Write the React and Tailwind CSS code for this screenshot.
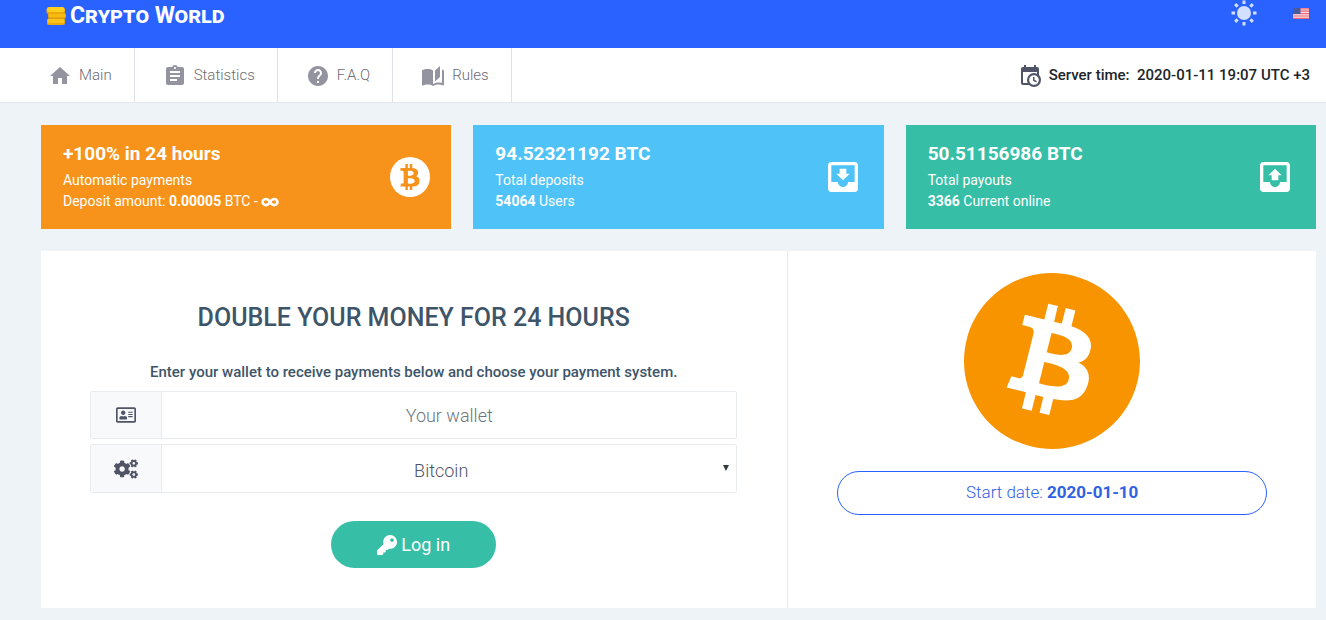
import { FaBtc, FaCogs, FaInfinity, FaKey, FaRegAddressCard } from "react-icons/fa";
import { MdAssignment, MdHelp, MdHome, MdMoveToInbox } from "react-icons/md";
import { SiBitcoin } from "react-icons/si";

function BookIcon({ className }) {
    return (
        <svg viewBox="0 0 24 24" fill="currentColor" className={className} aria-hidden="true">
            <path d="M19,2L14,6.5V17.5L19,13V2M6.5,5C4.55,5 2.45,5.4 1,6.5V21.16C1,21.41 1.25,21.66 1.5,21.66C1.6,21.66 1.65,21.59 1.75,21.59C3.1,20.94 5.05,20.5 6.5,20.5C8.45,20.5 10.55,20.9 12,22C13.35,21.15 15.8,20.5 17.5,20.5C19.15,20.5 20.85,20.81 22.25,21.56C22.35,21.61 22.4,21.59 22.5,21.59C22.75,21.59 23,21.34 23,21.09V6.5C22.4,6.05 21.75,5.75 21,5.5V19C19.9,18.65 18.7,18.5 17.5,18.5C15.8,18.5 13.35,19.15 12,20V6.5C10.55,5.4 8.45,5 6.5,5Z" />
        </svg>
    );
}

function CalendarClockIcon({ className }) {
    return (
        <svg viewBox="0 0 24 24" fill="currentColor" className={className} aria-hidden="true">
            <path d="M15,13H16.5V15.82L18.94,17.23L18.19,18.53L15,16.69V13M19,8H5V19H9.67C9.24,18.09 9,17.07 9,16A7,7 0 0,1 16,9C17.07,9 18.09,9.24 19,9.67V8M5,21C3.89,21 3,20.1 3,19V5C3,3.89 3.89,3 5,3H6V1H8V3H16V1H18V3H19A2,2 0 0,1 21,5V11.1C22.24,12.36 23,14.09 23,16A7,7 0 0,1 16,23C14.09,23 12.36,22.24 11.1,21H5M16,11.15A4.85,4.85 0 0,0 11.15,16C11.15,18.68 13.32,20.85 16,20.85A4.85,4.85 0 0,0 20.85,16C20.85,13.32 18.68,11.15 16,11.15Z" />
        </svg>
    );
}

function OutboxIcon({ className }) {
    return (
        <svg viewBox="0 0 24 24" fill="currentColor" className={className} aria-hidden="true">
            <path d="M19 3H4.99c-1.11 0-1.98.9-1.98 2L3 19c0 1.1.88 2 1.99 2H19c1.1 0 2-.9 2-2V5c0-1.1-.9-2-2-2zm0 12h-4c0 1.66-1.35 3-3 3s-3-1.34-3-3H4.99V5H19v10zM16 11l-4-4-4 4h2v3h4v-3z" />
        </svg>
    );
}

function SunIcon({ className }) {
    return (
        <svg viewBox="0 0 26 26" className={className} aria-hidden="true">
            <circle cx="13" cy="13" r="7" fill="currentColor" />
            <g stroke="currentColor" strokeWidth="3">
                {[0, 45, 90, 135, 180, 225, 270, 315].map((angle) => (
                    <path key={angle} d="M13 0.5V4" transform={`rotate(${angle} 13 13)`} />
                ))}
            </g>
        </svg>
    );
}

function CoinsIcon({ className }) {
    return (
        <svg viewBox="0 0 20 18" className={className} aria-hidden="true">
            <rect x="1" y="11.5" width="18" height="6.5" rx="2" fill="#eda90a" />
            <rect x="1.5" y="11.5" width="17" height="4.5" rx="2" fill="#fcc419" />
            <rect x="2" y="6" width="18" height="6" rx="2" fill="#dd9c08" />
            <rect x="2.5" y="6" width="17" height="4.5" rx="2" fill="#f7ba10" />
            <rect x="0.5" y="0.5" width="18.5" height="6.5" rx="2.5" fill="#eda90a" />
            <rect x="1" y="0" width="17.5" height="5" rx="2.2" fill="#ffcf20" />
        </svg>
    );
}

function FlagIcon({ className }) {
    return (
        <svg viewBox="0 0 16 11" className={className} aria-hidden="true">
            <rect width="16" height="11" rx="1" fill="#f6e3ec" />
            <path d="M0 .8H16M0 3.2H16M0 5.6H16M0 8H16M0 10.3H16" stroke="#f0646e" strokeWidth="1.2" />
            <rect width="7.5" height="6" fill="#4a5a9c" />
        </svg>
    );
}

const links = [
    { href: "#main", label: "Main", icon: MdHome },
    { href: "#statistics", label: "Statistics", icon: MdAssignment },
    { href: "#faq", label: "F.A.Q", icon: MdHelp },
    { href: "#rules", label: "Rules", icon: BookIcon },
];

function Header() {
    return (
        <header>
            <div className="flex h-12 justify-between bg-[#2962ff] pl-[46px] pr-[17px]">
                <a href="#main" className="mt-1 flex h-6 items-center gap-1 text-white">
                    <CoinsIcon className="h-[18px] w-5" />
                    <span className="text-[23px] font-bold leading-6 [font-variant:small-caps]">Crypto World</span>
                </a>
                <div className="flex h-[26px] items-center gap-9">
                    <button type="button" aria-label="Toggle theme" className="text-[#d4e0ff]">
                        <SunIcon className="size-[26px]" />
                    </button>
                    <button type="button" aria-label="Language">
                        <FlagIcon className="h-[11px] w-4" />
                    </button>
                </div>
            </div>

            <div className="flex h-[55px] items-stretch justify-between border-b border-[#e3e8ed] bg-white pl-5 pr-4">
                <nav className="flex">
                    {links.map((item) => (
                        <a
                            key={item.href}
                            href={item.href}
                            className="flex items-center gap-[7px] border-r border-[#dee2e6] pl-7 pr-[22px] pt-px text-[15px] font-light text-[#6c6c72]"
                        >
                            <item.icon className="size-6 text-[#9394a0]" />
                            {item.label}
                        </a>
                    ))}
                </nav>
                <div className="flex items-center gap-[7px] pt-px text-[15px] font-medium text-[#212529]">
                    <CalendarClockIcon className="size-6 text-[#4f5467]" />
                    <span>Server time:&nbsp; 2020-01-11 19:07 UTC +3</span>
                </div>
            </div>
        </header>
    );
}

function StatCard({ className, title, icon, children }) {
    return (
        <div className={`flex h-[104px] items-center justify-between pl-[22px] pr-[21px] text-white ${className}`}>
            <div className="pb-1">
                <h2 className="text-[19px] font-bold leading-8">{title}</h2>
                <div className="text-[14px] leading-[21px]">{children}</div>
            </div>
            {icon}
        </div>
    );
}

function LoginForm() {
    return (
        <form className="flex flex-col items-center pb-10 pl-[49px] pr-[50px] pt-[49px] text-[#3e5569]" onSubmit={(e) => e.preventDefault()}>
            <h1 className="text-[25px] font-medium leading-9">DOUBLE YOUR MONEY FOR 24 HOURS</h1>
            <p className="mt-6 text-[15px] font-medium leading-6">
                Enter your wallet to receive payments below and choose your payment system.
            </p>

            <div className="mt-[7px] flex h-12 w-full rounded-xs border border-[#e9ecef]">
                <label htmlFor="wallet" aria-label="Your wallet" className="flex w-[71px] items-center justify-center border-r border-[#e9ecef] bg-[#f8f9fa] text-[#4f5467]">
                    <FaRegAddressCard className="size-5" />
                </label>
                <input
                    id="wallet"
                    type="text"
                    placeholder="Your wallet"
                    className="min-w-0 flex-1 text-center text-[18px] font-light text-[#4f5467] outline-none placeholder:text-[#6c757d]"
                />
            </div>

            <div className="relative mt-[5px] flex h-[49px] w-full rounded-xs border border-[#e9ecef]">
                <label htmlFor="system" aria-label="Payment system" className="flex w-[71px] items-center justify-center border-r border-[#e9ecef] bg-[#f8f9fa] text-[#4f5467]">
                    <FaCogs className="size-6" />
                </label>
                <select
                    id="system"
                    className="min-w-0 flex-1 appearance-none bg-white pl-2 pr-6 pt-1 text-center text-[18px] font-light text-[#4f5467] outline-none [text-align-last:center]"
                >
                    <option>Bitcoin</option>
                </select>
                <svg viewBox="0 0 6 6" fill="#343a40" className="pointer-events-none absolute right-[7px] top-5 size-[6px]" aria-hidden="true">
                    <path d="M0 0H6L3 6Z" />
                </svg>
            </div>

            <button type="submit" className="mt-7 flex h-[47px] w-[165px] items-center justify-center gap-1 rounded-full bg-[#36bea6] text-[18px] text-white">
                <FaKey className="size-5" />
                Log in
            </button>
        </form>
    );
}

export default function App() {
    return (
        <div className="min-h-screen bg-[#eef3f8] font-['Roboto',sans-serif]">
            <Header />

            <main className="pb-3 pl-[41px] pr-[10px] pt-[22px]">
                <div className="grid grid-cols-3 gap-[22px]">
                    <StatCard
                        className="bg-[#f7931a]"
                        title="+100% in 24 hours"
                        icon={
                            <span className="flex size-10 items-center justify-center rounded-full bg-white text-[#f7931a]">
                                <FaBtc className="size-[26px]" />
                            </span>
                        }
                    >
                        <p>Automatic payments</p>
                        <p>
                            Deposit amount: <b>0.00005</b> BTC - <FaInfinity className="inline h-[14px] w-[18px]" />
                        </p>
                    </StatCard>
                    <StatCard className="bg-[#4fc3f7]" title="94.52321192 BTC" icon={<MdMoveToInbox className="size-10" />}>
                        <p>Total deposits</p>
                        <p><b>54064</b> Users</p>
                    </StatCard>
                    <StatCard className="bg-[#36bea6]" title="50.51156986 BTC" icon={<OutboxIcon className="size-10" />}>
                        <p>Total payouts</p>
                        <p><b>3366</b> Current online</p>
                    </StatCard>
                </div>

                <div className="mt-[22px] grid min-h-[357px] grid-cols-[747fr_529fr] bg-white">
                    <LoginForm />
                    <div className="flex flex-col items-center border-l border-[#e9ecef] px-[49px] pt-[22px]">
                        <div className="rounded-full bg-white text-[#f79400]">
                            <SiBitcoin className="size-44" />
                        </div>
                        <div className="mt-[22px] flex h-11 w-full items-center justify-center rounded-full border border-[#2962ff] text-[17px] text-[#2f62e4]">
                            <span className="font-light">Start date: <b className="font-bold">2020-01-10</b></span>
                        </div>
                    </div>
                </div>
            </main>
        </div>
    );
}
